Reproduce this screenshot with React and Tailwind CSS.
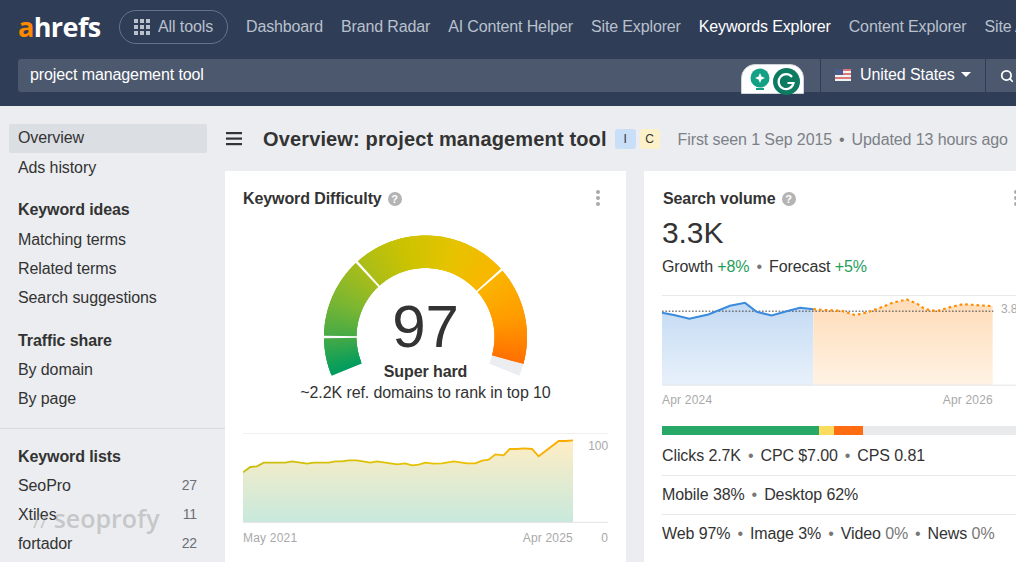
import React from "react";
import { Search } from "lucide-react";

const navItems = [
  "Dashboard",
  "Brand Radar",
  "AI Content Helper",
  "Site Explorer",
  "Keywords Explorer",
  "Content Explorer",
  "Site Audit",
];

const toPath = (pts) => pts.map((p, i) => `${i ? "L" : "M"}${p[0]} ${p[1]}`).join(" ");

const kdLine = [
  [38, 143], [60, 127], [80, 125], [100, 114], [165, 114], [185, 110], [230, 117], [250, 114],
  [295, 114], [315, 110], [335, 110], [355, 107], [380, 107], [420, 114], [440, 110], [500, 119],
  [525, 116], [545, 122], [565, 120], [585, 114], [610, 117], [635, 116], [670, 110], [710, 116],
  [735, 116], [755, 108], [775, 105], [795, 89], [820, 92], [838, 73], [860, 73], [880, 71],
  [905, 73], [925, 95], [985, 49], [1005, 49], [1028, 47],
];
const volBlue = [
  [36, 83], [75, 90], [118, 101], [175, 88], [240, 62], [285, 53], [320, 80], [365, 91], [410, 78],
  [450, 68], [490, 72],
];
const volOrange = [
  [490, 72], [530, 75], [575, 77], [615, 90], [650, 82], [690, 68], [730, 52], [770, 43], [800, 55],
  [825, 72], [860, 78], [900, 66], [940, 57], [980, 60], [1028, 63],
];

const stops = [
  [0, [0, 156, 95]],
  [22, [70, 170, 70]],
  [45, [125, 183, 50]],
  [70, [170, 189, 25]],
  [100, [205, 195, 0]],
  [130, [230, 195, 0]],
  [160, [250, 182, 0]],
  [190, [255, 155, 0]],
  [225, [255, 100, 0]],
];

function colorAt(t) {
  for (let i = 1; i < stops.length; i++) {
    if (t <= stops[i][0]) {
      const [a, c1] = stops[i - 1];
      const [b, c2] = stops[i];
      const k = (t - a) / (b - a);
      return `rgb(${c1.map((v, j) => Math.round(v + (c2[j] - v) * k)).join(",")})`;
    }
  }
  return "rgb(255,100,0)";
}

function wedge(from, to, r1, r2) {
  // angle 0 = lower left end of the gauge, going clockwise
  const cx = 101.5;
  const cy = 102;
  const pt = (a, r) => {
    const rad = ((a - 22.5) * Math.PI) / 180;
    return [cx - r * Math.cos(rad), cy - r * Math.sin(rad)];
  };
  const [a, b] = pt(from, r2);
  const [c, d] = pt(to, r2);
  const [e, f] = pt(to, r1);
  const [g, h] = pt(from, r1);
  return `M${a} ${b} A${r2} ${r2} 0 0 1 ${c} ${d} L${e} ${f} A${r1} ${r1} 0 0 0 ${g} ${h} Z`;
}

function Gauge() {
  const pieces = [];
  for (let a = 0; a < 218; a += 1) {
    pieces.push(<path key={a} d={wedge(a, Math.min(a + 2.5, 218), 69, 101.5)} fill={colorAt(a)} />);
  }
  const sep = (a) => <path d={wedge(a - 0.7, a + 0.7, 66, 104)} fill="#fff" />;
  return (
    <svg width="203" height="146" viewBox="0 0 203 146" className="block">
      {pieces}
      <path d={wedge(218, 225, 69, 101.5)} fill="#ebedf0" />
      {sep(22.5)}
      {sep(70)}
      {sep(161)}
    </svg>
  );
}

function HelpIcon() {
  return (
    <span className="flex h-[14px] w-[14px] items-center justify-center rounded-full bg-[#b4b4b4] text-[11px] leading-none font-bold text-white">
      ?
    </span>
  );
}

function Dots() {
  return (
    <span className="flex flex-col gap-[2px]">
      <span className="h-[4px] w-[4px] rounded-full bg-[#a9a9a9]" />
      <span className="h-[4px] w-[4px] rounded-full bg-[#a9a9a9]" />
      <span className="h-[4px] w-[4px] rounded-full bg-[#a9a9a9]" />
    </span>
  );
}

function SideRow({ children, count }) {
  return (
    <div className="flex h-[29px] items-center justify-between pr-[28px] pl-[18px] text-[16px] text-[#333]">
      <span>{children}</span>
      {count && <span className="text-[14px] text-[#6b6f76]">{count}</span>}
    </div>
  );
}

function SideHead({ children, className }) {
  return <div className={`flex h-[29px] items-center pl-[18px] text-[16px] font-bold text-[#333] ${className}`}>{children}</div>;
}

function Sep() {
  return <span className="mx-[7px] text-[#777]">•</span>;
}

export default function App() {
  return (
    <div
      className="relative h-[562px] w-[1016px] overflow-hidden bg-[#ebedf0] tracking-[-0.1px] text-[#333]"
      style={{ fontFamily: '"Liberation Sans", Arial, sans-serif' }}
    >
      <header className="h-[106px] overflow-hidden bg-[#2f3d57]">
        <div className="flex h-[53px] items-center whitespace-nowrap pl-[18px]">
          <div className="w-[82px] shrink-0 text-[27px] leading-none font-bold tracking-[-0.6px] text-white" style={{ fontFamily: '"Open Sans", sans-serif' }}>
            <span className="text-[#ff8800]">a</span>hrefs
          </div>
          <div className="ml-[19px] flex h-[34px] w-[109px] shrink-0 items-center rounded-full border border-[#66738a] pl-[14px] text-[16px] text-[#b9c1cd]">
            <svg width="16" height="16" viewBox="0 0 16 16" fill="#b9c1cd" className="mr-[8px]">
              <rect x="0" y="0" width="4" height="4" />
              <rect x="6" y="0" width="4" height="4" />
              <rect x="12" y="0" width="4" height="4" />
              <rect x="0" y="6" width="4" height="4" />
              <rect x="6" y="6" width="4" height="4" />
              <rect x="12" y="6" width="4" height="4" />
              <rect x="0" y="12" width="4" height="4" />
              <rect x="6" y="12" width="4" height="4" />
              <rect x="12" y="12" width="4" height="4" />
            </svg>
            All tools
          </div>
          <nav className="ml-[18px] flex shrink-0 gap-[18px] text-[16px] tracking-[-0.14px] text-[#b9c1cd]">
            {navItems.map((n) => (
              <span key={n} className={n === "Keywords Explorer" ? "text-white" : ""}>
                {n}
              </span>
            ))}
          </nav>
        </div>
        <div className="mt-[6px] flex h-[33px] pl-[18px] text-[16px] whitespace-nowrap text-white">
          <div className="relative flex w-[802px] shrink-0 items-center rounded-l-[3px] bg-[#4c586e] pb-[2px] pl-[12px]">
            project management tool
            <div className="absolute top-[5px] left-[723px] flex h-[30px] w-[63px] items-start gap-[3px] rounded-t-[14px] border border-[#cfd3d9] bg-white pt-[3px] pl-[8px]">
              <svg width="20" height="26" viewBox="0 0 20 26">
                <circle cx="10" cy="10" r="9.5" fill="#13a085" />
                <path d="M10 5 L11.5 8.5 L15 10 L11.5 11.5 L10 15 L8.5 11.5 L5 10 L8.5 8.5 Z" fill="#fff" />
                <rect x="6" y="20" width="8" height="2" fill="#13a085" />
              </svg>
              <svg width="27" height="27" viewBox="0 0 27 27">
                <circle cx="13.5" cy="13.5" r="13.5" fill="#0d7a62" />
                <path d="M19 9 A7.5 7.5 0 1 0 20.5 15 L14.5 15" fill="none" stroke="#fff" strokeWidth="2.2" />
              </svg>
            </div>
          </div>
          <div className="ml-px flex w-[164px] shrink-0 items-center bg-[#4c586e] pb-[2px] pl-[14px]">
            <svg width="16" height="12" viewBox="0 0 16 12" className="mr-[9px]">
              <rect width="16" height="12" fill="#f2f2f2" />
              <rect y="0" width="16" height="2" fill="#d9777a" />
              <rect y="4" width="16" height="2" fill="#d9777a" />
              <rect y="8" width="16" height="2" fill="#d9777a" />
              <rect width="8" height="6" fill="#4a5b8c" />
            </svg>
            United States
            <svg width="10" height="5" viewBox="0 0 10 5" className="ml-[6px]" fill="#fff">
              <path d="M0 0 L10 0 L5 5 Z" />
            </svg>
          </div>
          <div className="ml-px flex w-[40px] shrink-0 items-center bg-[#4c586e] pl-[14px]">
            <Search size={14} strokeWidth={3} color="#fff" />
          </div>
        </div>
      </header>

      <div className="flex">
        <aside className="h-[456px] w-[225px] shrink-0">
          <div className="mt-[18px] ml-[9px] flex h-[29px] w-[198px] items-center rounded-[2px] bg-[#dbdee3] pb-[2px] pl-[9px] text-[16px]">
            Overview
          </div>
          <div>
            <SideRow>Ads history</SideRow>
            <SideHead className="mt-[13px]">Keyword ideas</SideHead>
            <div className="mt-px">
              <SideRow>Matching terms</SideRow>
              <SideRow>Related terms</SideRow>
              <SideRow>Search suggestions</SideRow>
            </div>
            <SideHead className="mt-[14px]">Traffic share</SideHead>
            <SideRow>By domain</SideRow>
            <SideRow>By page</SideRow>
          </div>
          <div className="mt-[15px] border-t border-[#d8dade]" />
          <SideHead className="mt-[13px]">Keyword lists</SideHead>
          <SideRow count="27">SeoPro</SideRow>
          <SideRow count="11">Xtiles</SideRow>
          <SideRow count="22">fortador</SideRow>
        </aside>

        <main className="min-w-0 flex-1">
          <div className="mt-[19px] flex h-[28px] items-center whitespace-nowrap">
            <svg width="16" height="14" viewBox="0 0 16 14" className="ml-[1px]" fill="#333">
              <rect y="0" width="16" height="2.2" />
              <rect y="5.5" width="16" height="2.2" />
              <rect y="11" width="16" height="2.2" />
            </svg>
            <h1 className="ml-[21px] text-[20px] leading-none font-bold tracking-[0.14px] text-[#333]">Overview: project management tool</h1>
            <span className="ml-[8px] flex h-[20px] w-[21px] items-center justify-center rounded-[3px] bg-[#c9dff7] text-[12px]">I</span>
            <span className="ml-[4px] flex h-[20px] w-[20px] items-center justify-center rounded-[3px] bg-[#fdf1c9] text-[12px]">C</span>
            <span className="mt-[2px] ml-[18px] text-[16px] text-[#7c8087]">
              First seen 1 Sep 2015<Sep />Updated 13 hours ago
            </span>
          </div>

          <div className="mt-[18px] flex gap-[18px]">
            <section className="h-[400px] w-[401px] shrink-0 bg-white px-[18px]">
              <div className="flex h-[54px] items-center justify-between pr-[8px]">
                <div className="mt-[2px] flex items-center gap-[6px] text-[16px] font-bold">
                  Keyword Difficulty
                  <HelpIcon />
                </div>
                <Dots />
              </div>
              <div className="relative mt-[10px] ml-[81px] h-[146px] w-[203px]">
                <Gauge />
                <div className="absolute top-[62px] left-0 w-full text-center text-[60px] leading-none text-[#333]">97</div>
                <div className="absolute top-[128px] left-0 w-full text-center text-[16px] leading-[18px] font-bold">Super hard</div>
              </div>
              <div className="mt-[3px] text-center text-[16px] leading-[18px] whitespace-nowrap">
                ~2.2K ref. domains to rank in top 10
              </div>
              <div className="relative mt-[31px] h-[90px]">
                <svg width="365" height="90" viewBox="38 25 1095 270" className="block">
                  <defs>
                    <linearGradient id="kdArea" x1="0" y1="0" x2="0" y2="1">
                      <stop offset="0" stopColor="#ffedc4" />
                      <stop offset="1" stopColor="#c7e9dc" />
                    </linearGradient>
                    <linearGradient id="kdStroke" x1="0" y1="0" x2="1" y2="0">
                      <stop offset="0" stopColor="#c8bd10" />
                      <stop offset="0.6" stopColor="#e6c300" />
                      <stop offset="1" stopColor="#ffa800" />
                    </linearGradient>
                  </defs>
                  <path d="M38 25.5 H1133" stroke="#e8e8e8" strokeWidth="3" />
                  <path d={`${toPath(kdLine)} L1028 293 L38 293 Z`} fill="url(#kdArea)" />
                  <path d="M38 293 H1133" stroke="#e3e3e3" strokeWidth="3" />
                  <path d={toPath(kdLine)} fill="none" stroke="url(#kdStroke)" strokeWidth="5.5" />
                </svg>
                <span className="absolute top-[6px] right-0 text-[12px] leading-[14px] text-[#a9a9a9]">100</span>
              </div>
              <div className="relative mt-[8px] flex justify-between pr-[35px] text-[12px] leading-[14px] tracking-[0.2px] text-[#a9a9a9]">
                <span>May 2021</span>
                <span>Apr 2025</span>
                <span className="absolute right-0">0</span>
              </div>
            </section>

            <section className="h-[400px] w-[401px] shrink-0 bg-white pl-[18px]">
              <div className="flex h-[54px] items-center justify-between pr-[27px]">
                <div className="mt-[2px] ml-px flex items-center gap-[6px] text-[16px] font-bold">
                  Search volume
                  <HelpIcon />
                </div>
                <Dots />
              </div>
              <div className="-mt-[10px] text-[30px] leading-[36px]">3.3K</div>
              <div className="mt-[7px] flex h-[18px] items-center text-[16px] whitespace-nowrap">
                Growth&nbsp;<span className="text-[#1f9e5a]">+8%</span>
                <Sep />
                Forecast&nbsp;<span className="text-[#1f9e5a]">+5%</span>
              </div>
              <div className="relative mt-[19px] h-[91px]">
                <svg width="354" height="91" viewBox="36 30 1062 272" className="block">
                  <defs>
                    <linearGradient id="volBlue" x1="0" y1="0" x2="0" y2="1">
                      <stop offset="0" stopColor="#c3daf3" />
                      <stop offset="1" stopColor="#e8f1fb" />
                    </linearGradient>
                    <linearGradient id="volOrange" x1="0" y1="0" x2="0" y2="1">
                      <stop offset="0" stopColor="#ffdcb8" />
                      <stop offset="1" stopColor="#fff2e4" />
                    </linearGradient>
                  </defs>
                  <path d="M36 31 H1098" stroke="#e8e8e8" strokeWidth="3" />
                  <path d={`${toPath(volBlue)} L490 300 L36 300 Z`} fill="url(#volBlue)" />
                  <path d={`${toPath(volOrange)} L1028 300 L490 300 Z`} fill="url(#volOrange)" />
                  <path d="M36 300 H1098" stroke="#e3e5e8" strokeWidth="3" />
                  <path d="M36 78 H1030" stroke="#444" strokeWidth="3" strokeDasharray="5 5" />
                  <path d={toPath(volBlue)} fill="none" stroke="#3a8ade" strokeWidth="6" />
                  <path d={toPath(volOrange)} fill="none" stroke="#ff8c00" strokeWidth="6.5" strokeDasharray="8 9" />
                </svg>
                <span className="absolute top-[7px] left-[339px] text-[12px] leading-[14px] text-[#a9a9a9]">3.8K</span>
              </div>
              <div className="mt-[7px] flex w-[331px] justify-between text-[12px] leading-[14px] tracking-[0.2px] text-[#a9a9a9]">
                <span>Apr 2024</span>
                <span>Apr 2026</span>
              </div>
              <div className="mt-[19px] flex h-[9px]">
                <div className="w-[157px] bg-[#27a866]" />
                <div className="w-[15px] bg-[#fcdc5e]" />
                <div className="w-[29px] bg-[#ff6c11]" />
                <div className="flex-1 bg-[#e9eaec]" />
              </div>
              <div className="flex h-[42px] items-center text-[16px] whitespace-nowrap">
                Clicks 2.7K<Sep />CPC $7.00<Sep />CPS 0.81
              </div>
              <div className="mt-[-2px] flex h-[39px] items-center border-t border-[#e8e8e8] text-[16px] whitespace-nowrap">
                Mobile 38%<Sep />Desktop 62%
              </div>
              <div className="flex h-[39px] items-center border-t border-[#e8e8e8] text-[16px] whitespace-nowrap">
                Web 97%<Sep />Image 3%<Sep />Video&nbsp;<span className="text-[#777]">0%</span><Sep />News&nbsp;<span className="text-[#777]">0%</span>
              </div>
            </section>
          </div>
        </main>
      </div>

      <div
        className="absolute top-[500px] left-[33px] text-[25px] leading-[36px] font-semibold tracking-[0px] text-[#8a8a8a]/40"
        style={{ fontFamily: '"Open Sans", sans-serif' }}
      >
        <span className="mr-[6px] text-[20px] font-normal">//</span>seoprofy
      </div>
    </div>
  );
}
